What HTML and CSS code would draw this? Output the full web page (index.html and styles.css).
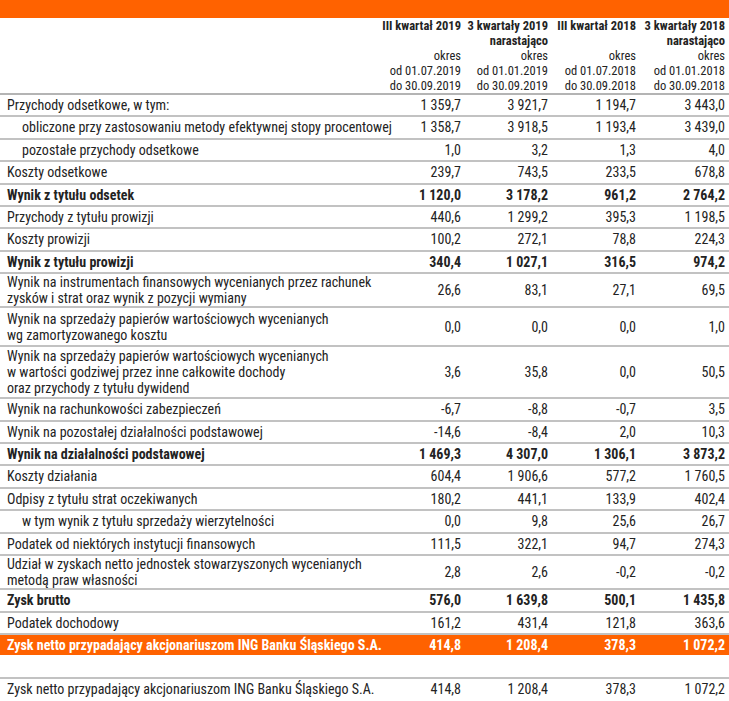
FILE: index.html
```html
<!DOCTYPE html>
<html lang="pl">
<head>
<meta charset="utf-8">
<title>Rachunek zysków i strat</title>
<link rel="stylesheet" href="styles.css">
</head>
<body>
<table class="fin">
  <colgroup>
    <col class="c-label"><col class="c-n1"><col class="c-n2"><col class="c-n3"><col class="c-n4">
  </colgroup>
  <thead>
    <tr class="topbar"><td colspan="5"></td></tr>
    <tr class="head">
      <th></th>
      <th><b>III kwartał 2019</b><br><br>okres<br>od 01.07.2019<br>do 30.09.2019</th>
      <th><b>3 kwartały 2019<br>narastająco</b><br>okres<br>od 01.01.2019<br>do 30.09.2019</th>
      <th><b>III kwartał 2018</b><br><br>okres<br>od 01.07.2018<br>do 30.09.2018</th>
      <th><b>3 kwartały 2018<br>narastająco</b><br>okres<br>od 01.01.2018<br>do 30.09.2018</th>
    </tr>
  </thead>
  <tbody>
    <tr><td>Przychody odsetkowe, w tym:</td><td>1 359,7</td><td>3 921,7</td><td>1 194,7</td><td>3 443,0</td></tr>
    <tr><td class="ind">obliczone przy zastosowaniu metody efektywnej stopy procentowej</td><td>1 358,7</td><td>3 918,5</td><td>1 193,4</td><td>3 439,0</td></tr>
    <tr><td class="ind">pozostałe przychody odsetkowe</td><td>1,0</td><td>3,2</td><td>1,3</td><td>4,0</td></tr>
    <tr><td>Koszty odsetkowe</td><td>239,7</td><td>743,5</td><td>233,5</td><td>678,8</td></tr>
    <tr class="bold"><td>Wynik z tytułu odsetek</td><td>1 120,0</td><td>3 178,2</td><td>961,2</td><td>2 764,2</td></tr>
    <tr><td>Przychody z tytułu prowizji</td><td>440,6</td><td>1 299,2</td><td>395,3</td><td>1 198,5</td></tr>
    <tr><td>Koszty prowizji</td><td>100,2</td><td>272,1</td><td>78,8</td><td>224,3</td></tr>
    <tr class="bold"><td>Wynik z tytułu prowizji</td><td>340,4</td><td>1 027,1</td><td>316,5</td><td>974,2</td></tr>
    <tr class="multi m-a"><td>Wynik na instrumentach finansowych wycenianych przez rachunek<br>zysków i strat oraz wynik z pozycji wymiany</td><td>26,6</td><td>83,1</td><td>27,1</td><td>69,5</td></tr>
    <tr class="multi m-b"><td>Wynik na sprzedaży papierów wartościowych wycenianych<br>wg zamortyzowanego kosztu</td><td>0,0</td><td>0,0</td><td>0,0</td><td>1,0</td></tr>
    <tr class="multi m-c"><td>Wynik na sprzedaży papierów wartościowych wycenianych<br>w wartości godziwej przez inne całkowite dochody<br>oraz przychody z tytułu dywidend</td><td>3,6</td><td>35,8</td><td>0,0</td><td>50,5</td></tr>
    <tr><td>Wynik na rachunkowości zabezpieczeń</td><td>-6,7</td><td>-8,8</td><td>-0,7</td><td>3,5</td></tr>
    <tr><td>Wynik na pozostałej działalności podstawowej</td><td>-14,6</td><td>-8,4</td><td>2,0</td><td>10,3</td></tr>
    <tr class="bold"><td>Wynik na działalności podstawowej</td><td>1 469,3</td><td>4 307,0</td><td>1 306,1</td><td>3 873,2</td></tr>
    <tr><td>Koszty działania</td><td>604,4</td><td>1 906,6</td><td>577,2</td><td>1 760,5</td></tr>
    <tr><td>Odpisy z tytułu strat oczekiwanych</td><td>180,2</td><td>441,1</td><td>133,9</td><td>402,4</td></tr>
    <tr><td class="ind">w tym wynik z tytułu sprzedaży wierzytelności</td><td>0,0</td><td>9,8</td><td>25,6</td><td>26,7</td></tr>
    <tr><td>Podatek od niektórych instytucji finansowych</td><td>111,5</td><td>322,1</td><td>94,7</td><td>274,3</td></tr>
    <tr class="multi m-d"><td>Udział w zyskach netto jednostek stowarzyszonych wycenianych<br>metodą praw własności</td><td>2,8</td><td>2,6</td><td>-0,2</td><td>-0,2</td></tr>
    <tr class="bold"><td>Zysk brutto</td><td>576,0</td><td>1 639,8</td><td>500,1</td><td>1 435,8</td></tr>
    <tr><td>Podatek dochodowy</td><td>161,2</td><td>431,4</td><td>121,8</td><td>363,6</td></tr>
    <tr class="bold hl"><td>Zysk netto przypadający akcjonariuszom ING Banku Śląskiego S.A.</td><td>414,8</td><td>1 208,4</td><td>378,3</td><td>1 072,2</td></tr>
    <tr class="blank"><td colspan="5"></td></tr>
    <tr class="last"><td>Zysk netto przypadający akcjonariuszom ING Banku Śląskiego S.A.</td><td>414,8</td><td>1 208,4</td><td>378,3</td><td>1 072,2</td></tr>
  </tbody>
</table>
</body>
</html>
```
FILE: styles.css
```css
html, body {
  margin: 0;
  padding: 0;
  background: #ffffff;
}
body {
  font-family: "Liberation Sans Narrow", "Roboto Condensed", "Liberation Sans", sans-serif;
  font-size: 14px;
  color: #232323;
}
.fin {
  width: 729px;
  border-collapse: collapse;
  table-layout: fixed;
}
.c-label { width: 377px; }
.c-n1 { width: 88px; }
.c-n2 { width: 87px; }
.c-n3 { width: 88px; }
.c-n4 { width: 89px; }

.topbar td {
  height: 18px;
  padding: 0;
  background: #ff6200;
}
.head th {
  padding: 0 4px 0 0;
  line-height: 15px;
  font-weight: normal;
  text-align: right;
  vertical-align: top;
  font-size: 12.5px;
  border-bottom: 2px solid #b4b4b4;
  white-space: nowrap;
}
.head th b { font-weight: bold; }

tbody td {
  padding: 2px 4px 2px 0;
  line-height: 16.4px;
  border-bottom: 2px solid #c2c2c2;
  text-align: right;
  white-space: nowrap;
  vertical-align: middle;
}
tbody td:first-child {
  text-align: left;
  padding-left: 7px;
}
tbody td.ind { padding-left: 22px; }

.bold td { font-weight: bold; }

.multi td { line-height: 16px; }
.m-a td { padding-top: 0; padding-bottom: 0; }
.m-b td { padding-top: 3px; padding-bottom: 2px; }
.m-c td { padding-top: 1px; padding-bottom: 1px; }
.m-d td { padding-top: 0; padding-bottom: 0; }

.hl td {
  background: #ff6200;
  color: #ffffff;
  border-bottom: 0;
}
.blank td {
  height: 22px;
  padding: 0;
}
.last td { border-bottom: 0; }
```
